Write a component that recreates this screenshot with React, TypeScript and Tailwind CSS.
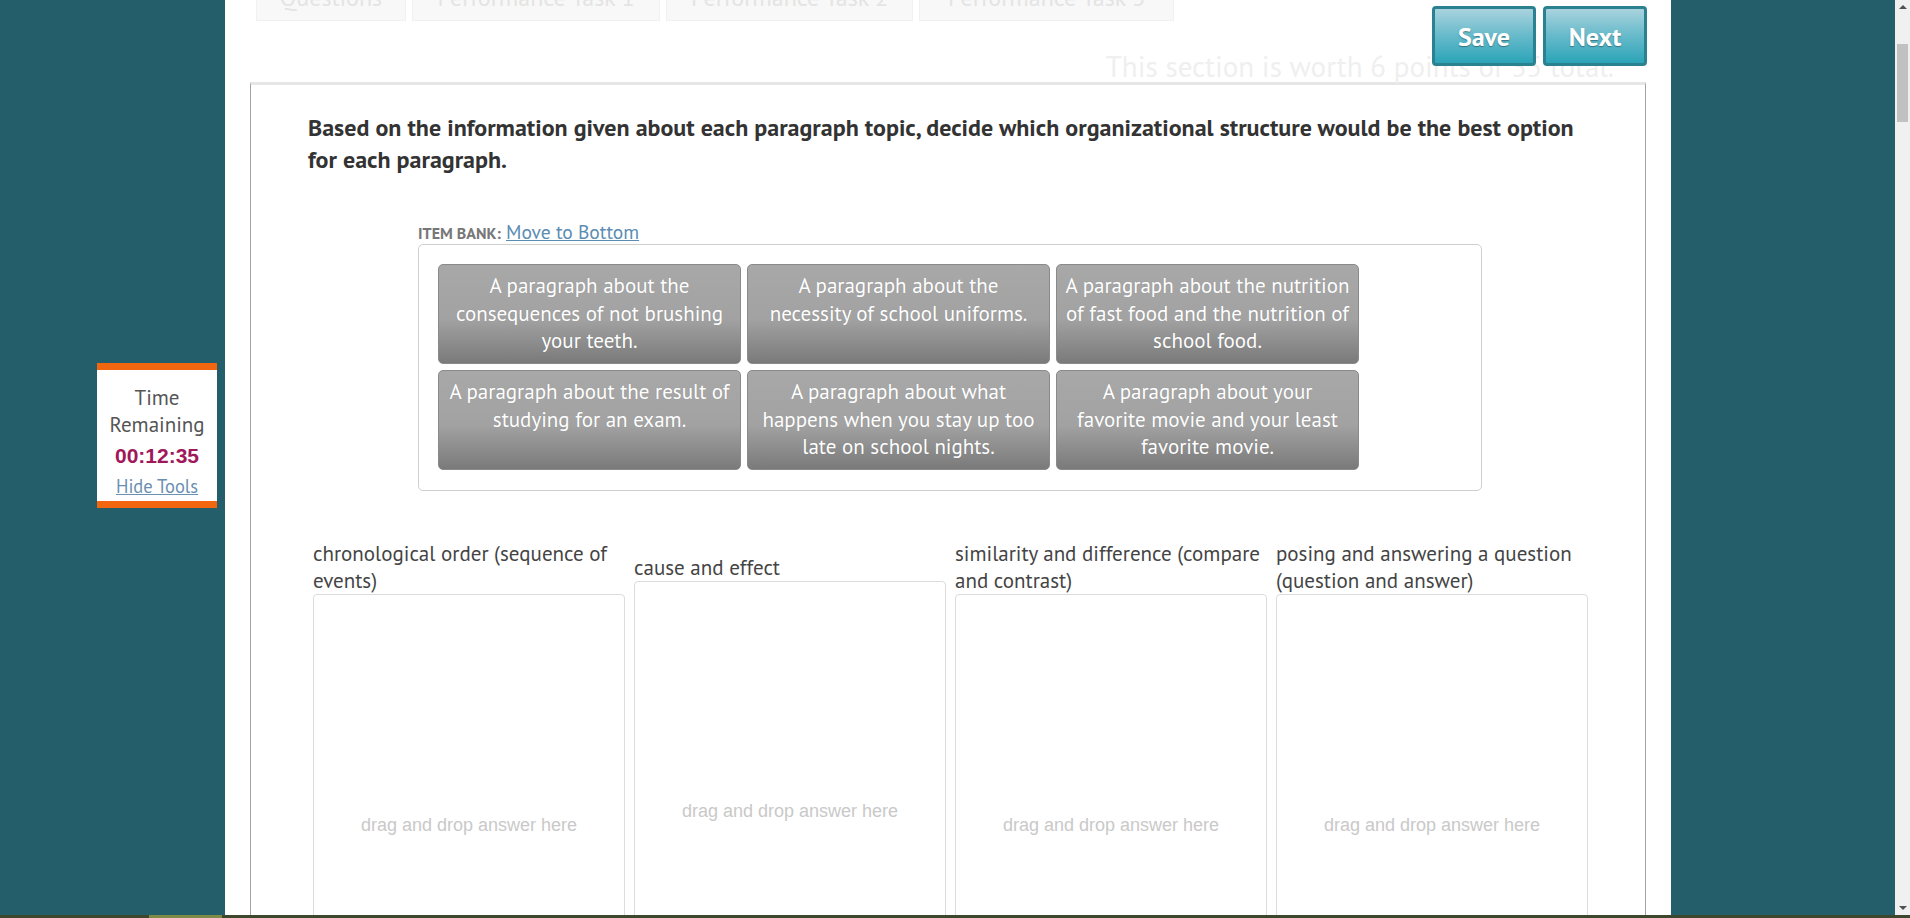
import React from "react";

const FONT = "font-['Liberation_Sans_Narrow','PT_Sans','Roboto',sans-serif]";

const tabs = [
  { label: "Questions", w: "w-[150px]" },
  { label: "Performance Task 1", w: "w-[248px]" },
  { label: "Performance Task 2", w: "w-[247px]" },
  { label: "Performance Task 3", w: "w-[255px]" },
];

// lines kept as in the item bank
const items = [
  ["A paragraph about the", "consequences of not brushing", "your teeth."],
  ["A paragraph about the", "necessity of school uniforms."],
  ["A paragraph about the nutrition", "of fast food and the nutrition of", "school food."],
  ["A paragraph about the result of", "studying for an exam."],
  ["A paragraph about what", "happens when you stay up too", "late on school nights."],
  ["A paragraph about your", "favorite movie and your least", "favorite movie."],
];

const columns = [
  "chronological order (sequence of events)",
  "cause and effect",
  "similarity and difference (compare and contrast)",
  "posing and answering a question (question and answer)",
];

function TimerBox() {
  return (
    <div className="w-[120px] bg-white border-t-[7px] border-b-[7px] border-[#f2660f] flex flex-col items-center pt-[14px] pb-[3px]">
      <span className="text-[21px] leading-[27px] text-[#555]">Time</span>
      <span className="text-[21px] leading-[27px] text-[#555]">Remaining</span>
      <span className="text-[21px] leading-[36px] font-bold text-[#a0175a] font-['Liberation_Sans',sans-serif]">
        00:12:35
      </span>
      <a className="text-[18.5px] leading-[24px] text-[#6b8fb1] underline cursor-pointer">Hide Tools</a>
    </div>
  );
}

function ItemCard({ lines }: { lines: string[] }) {
  return (
    <div className="w-[303px] h-[100px] rounded-[5px] border border-[#8a8a8a] bg-[linear-gradient(to_bottom,#a8a8a8_0%,#a2a2a2_55%,#7a7a7a_100%)] px-[4px] pt-[7px] text-center text-[21px] leading-[27.5px] text-white whitespace-nowrap [text-shadow:0_0_1px_rgba(0,0,0,0.15)]">
      {lines.map((l) => (
        <div key={l}>{l}</div>
      ))}
    </div>
  );
}

function DropColumn({ label }: { label: string }) {
  return (
    <div className="w-[312px] flex flex-col">
      <div className="text-[21px] leading-[27px] text-[#444]">{label}</div>
      <div className="h-[462px] rounded-[4px] border border-[#dcdcdc] flex items-center justify-center">
        <span className="font-['Liberation_Sans',sans-serif] text-[18px] text-[#c9c9c9]">drag and drop answer here</span>
      </div>
    </div>
  );
}

export default function App() {
  return (
    <div className={`h-[918px] w-full flex flex-col overflow-hidden bg-[#245e6b] ${FONT}`}>
      <div className="flex-1 flex min-h-0">
        {/* left gutter with tools */}
        <div className="w-[225px] shrink-0 pl-[97px] pt-[363px]">
          <TimerBox />
        </div>

        {/* page */}
        <main className="w-[1446px] shrink-0 bg-white overflow-hidden">
          <div className="flex items-start justify-between pl-[31px] pr-[24px]">
            <div className="flex gap-[6px] -mt-[22px]">
              {tabs.map((t) => (
                <div
                  key={t.label}
                  className={`${t.w} h-[43px] border border-[#f1f1f1] bg-[#f8f8f8] text-center text-[24px] leading-[38px] text-[#e4e4e4]`}
                >
                  {t.label}
                </div>
              ))}
            </div>
            <div className="relative z-10 flex gap-[7px] mt-[6px]">
              {["Save", "Next"].map((b) => (
                <button
                  key={b}
                  className="w-[104px] h-[60px] rounded-[4px] border-[3px] border-[#2b8190] bg-[linear-gradient(to_bottom,#a9d3de_0%,#6cbccc_45%,#2ba4b8_100%)] text-[26px] font-bold text-white [text-shadow:0_1px_1px_rgba(0,0,0,0.35)]"
                >
                  {b}
                </button>
              ))}
            </div>
          </div>
          <div className="-mt-[15px] pr-[57px] text-right text-[29px] leading-[30px] text-[#efefef]">
            This section is worth 6 points of 35 total.
          </div>

          <section className="mx-[25px] mt-[1px] border-t-[3px] border-t-[#e6e6e6] border-x border-x-[#a3a3a3] pl-[57px] pr-[54px] pt-[27px]">
            <p className="text-[24px] leading-[32px] font-bold text-[#333]">
              Based on the information given about each paragraph topic, decide which organizational structure would be
              the best option for each paragraph.
            </p>

            <div className="w-[1064px] ml-[110px] mt-[45px]">
              <div className="text-[19.5px] leading-[22px]">
                <span className="text-[16px] font-bold text-[#777] uppercase">Item Bank:</span>{" "}
                <a className="text-[#5b8db3] underline cursor-pointer">Move to Bottom</a>
              </div>
              <div className="h-[247px] rounded-[5px] border border-[#cfcfcf] pl-[19px] pt-[19px] flex flex-wrap content-start gap-x-[6px] gap-y-[6px]">
                {items.map((lines) => (
                  <ItemCard key={lines[0] + lines[1]} lines={lines} />
                ))}
              </div>
            </div>

            <div className="mt-[49px] pl-[5px] flex items-center gap-[9px]">
              {columns.map((c) => (
                <DropColumn key={c} label={c} />
              ))}
            </div>
          </section>
        </main>

        <div className="flex-1" />

        {/* scrollbar */}
        <div className="w-[15px] shrink-0 bg-[#f0f0f0] flex flex-col items-center">
          <div className="h-[14px] flex items-center justify-center">
            <div className="w-0 h-0 border-x-[4px] border-x-transparent border-b-[4px] border-b-[#505050]" />
          </div>
          <div className="mt-[30px] w-[11px] h-[78px] bg-[#c1c1c1]" />
          <div className="flex-1" />
          <div className="h-[14px] flex items-center justify-center">
            <div className="w-0 h-0 border-x-[4px] border-x-transparent border-t-[4px] border-t-[#505050]" />
          </div>
        </div>
      </div>

      {/* taskbar edge */}
      <div className="h-[3px] shrink-0 bg-[#3c472d] flex">
        <div className="ml-[149px] w-[73px] bg-[#7f8a46]" />
      </div>
    </div>
  );
}
